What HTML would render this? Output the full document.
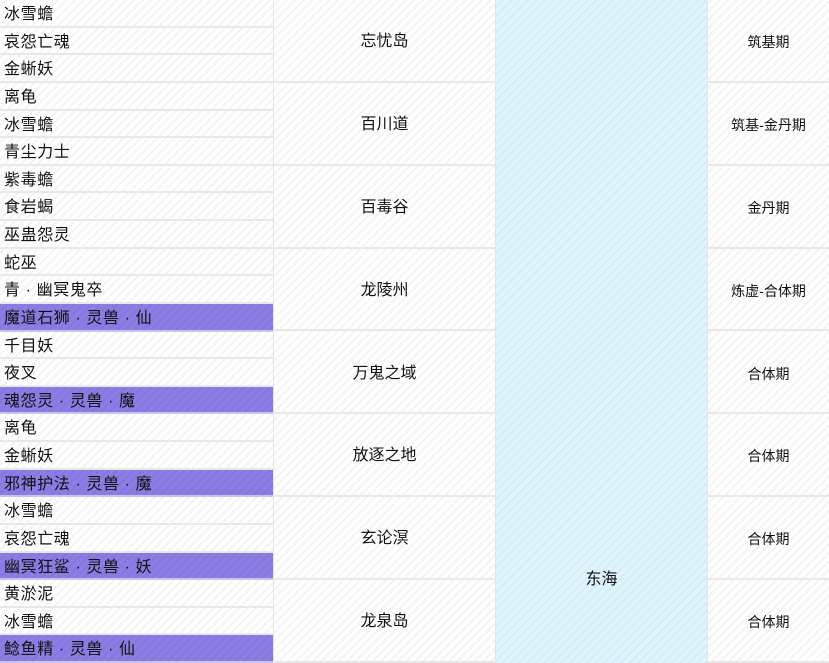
<!DOCTYPE html>
<html><head><meta charset="utf-8"><style>
html,body{margin:0;padding:0;width:829px;height:663px;overflow:hidden;background:#fff}
body{position:relative;font-family:"Liberation Sans","Noto Sans CJK SC",sans-serif;color:#111;
background:repeating-linear-gradient(135deg,#fff 0 4px,#f4f4f4 4px 6px)}
.c{position:absolute;box-sizing:border-box}
.r{left:0;width:273px;height:27.625px;border-bottom:2px solid #e8e8e8;font-size:16px;line-height:26px;padding-top:2px;padding-left:4px;white-space:nowrap;letter-spacing:0.6px;overflow:hidden}
.p{background:repeating-linear-gradient(135deg,#8a7de4 0 4px,#8477de 4px 6px);border-bottom:2px solid #c8c2f0}
.g2{left:274px;width:221px;height:82.875px;border-bottom:2px solid #e8e8e8;font-size:16px;text-align:center;line-height:84px}
.g4{left:708px;width:121px;height:82.875px;border-bottom:2px solid #e8e8e8;font-size:14px;text-align:center;line-height:84px}
.v{top:0;height:663px;width:1px;background:#e4e4e4}
.blue{left:496px;top:0;width:211px;height:663px;background:repeating-linear-gradient(135deg,#dff4fb 0 4px,#d4eef7 4px 6px)}
</style></head><body>
<div class="c blue"></div>
<div class="c" style="left:496px;top:569px;width:211px;text-align:center;font-size:16px;line-height:22px">东海</div>
<div class="c v" style="left:273px"></div>
<div class="c v" style="left:495px"></div>
<div class="c v" style="left:707px"></div>

<div class="c r" style="top:0px">冰雪蟾</div>
<div class="c r" style="top:27.6px">哀怨亡魂</div>
<div class="c r" style="top:55.3px">金蜥妖</div>
<div class="c r" style="top:82.9px">离龟</div>
<div class="c r" style="top:110.5px">冰雪蟾</div>
<div class="c r" style="top:138.1px">青尘力士</div>
<div class="c r" style="top:165.8px">紫毒蟾</div>
<div class="c r" style="top:193.4px">食岩蝎</div>
<div class="c r" style="top:221px">巫蛊怨灵</div>
<div class="c r" style="top:248.6px">蛇巫</div>
<div class="c r" style="top:276.3px">青 · 幽冥鬼卒</div>
<div class="c r p" style="top:303.9px">魔道石狮 · 灵兽 · 仙</div>
<div class="c r" style="top:331.5px">千目妖</div>
<div class="c r" style="top:359.1px">夜叉</div>
<div class="c r p" style="top:386.8px">魂怨灵 · 灵兽 · 魔</div>
<div class="c r" style="top:414.4px">离龟</div>
<div class="c r" style="top:442px">金蜥妖</div>
<div class="c r p" style="top:469.6px">邪神护法 · 灵兽 · 魔</div>
<div class="c r" style="top:497.3px">冰雪蟾</div>
<div class="c r" style="top:524.9px">哀怨亡魂</div>
<div class="c r p" style="top:552.5px">幽冥狂鲨 · 灵兽 · 妖</div>
<div class="c r" style="top:580.1px">黄淤泥</div>
<div class="c r" style="top:607.8px">冰雪蟾</div>
<div class="c r p" style="top:635.4px">鲶鱼精 · 灵兽 · 仙</div>

<div class="c g2" style="top:0px">忘忧岛</div>
<div class="c g2" style="top:82.9px">百川道</div>
<div class="c g2" style="top:165.8px">百毒谷</div>
<div class="c g2" style="top:248.6px">龙陵州</div>
<div class="c g2" style="top:331.5px">万鬼之域</div>
<div class="c g2" style="top:414.4px">放逐之地</div>
<div class="c g2" style="top:497.3px">玄论溟</div>
<div class="c g2" style="top:580.1px">龙泉岛</div>

<div class="c g4" style="top:0px">筑基期</div>
<div class="c g4" style="top:82.9px">筑基-金丹期</div>
<div class="c g4" style="top:165.8px">金丹期</div>
<div class="c g4" style="top:248.6px">炼虚-合体期</div>
<div class="c g4" style="top:331.5px">合体期</div>
<div class="c g4" style="top:414.4px">合体期</div>
<div class="c g4" style="top:497.3px">合体期</div>
<div class="c g4" style="top:580.1px">合体期</div>
</body></html>
